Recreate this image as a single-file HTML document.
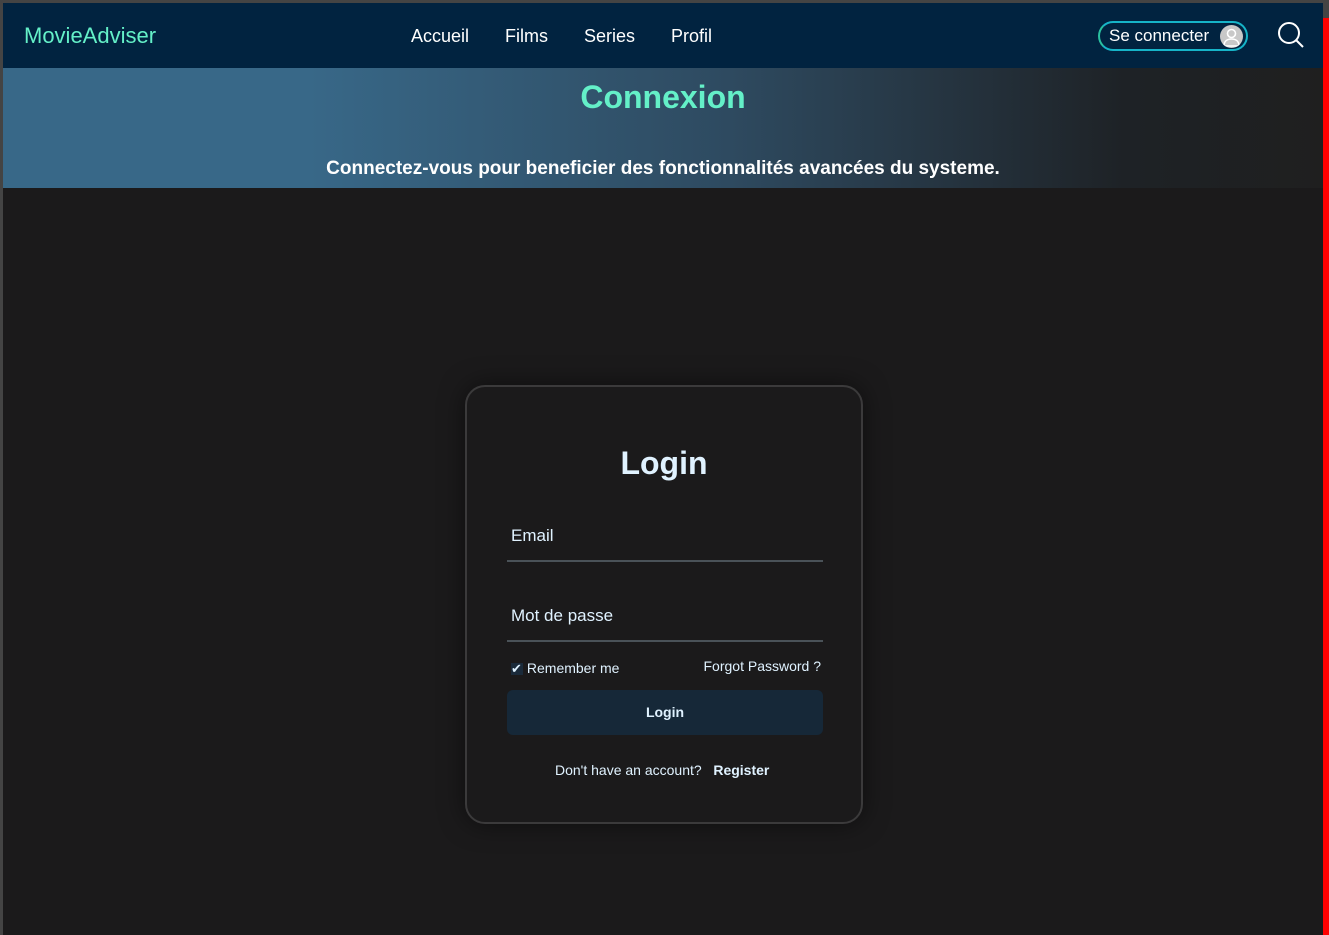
<!DOCTYPE html>
<html><head><meta charset="utf-8"><style>
*{margin:0;padding:0;box-sizing:border-box}
html,body{width:1329px;height:935px;overflow:hidden;background:#444;font-family:"Liberation Sans",Arial,sans-serif}
#frame{position:absolute;left:3px;top:3px;width:1320px;height:932px;background:#1b1a1b}
#red{position:absolute;left:1323px;top:18px;width:6px;height:917px;background:#f00}
nav{position:absolute;left:0;top:0;width:1320px;height:65px;background:#012340}
.logo{position:absolute;left:21px;top:20px;font-size:22px;color:#64f0c8}
.links{position:absolute;top:23px;left:407px;font-size:18px;color:#fff}
.links span{position:absolute;white-space:nowrap}
.btn{position:absolute;left:1095px;top:18px;width:150px;height:30px;border-radius:15px;border:2px solid #16b4c8;border-left-color:#2ac0a0;color:#fff;font-size:17px;padding:3px 0 0 9px}
.av{position:absolute;right:3px;top:2px;width:23px;height:23px;border-radius:50%;background:#c8c8c8;overflow:hidden}
.banner{position:absolute;left:0;top:65px;width:1320px;height:120px;background:linear-gradient(90deg,#386888 0%,#386888 23%,#2e4a60 55%,#1e2226 85%,#1f1f1f 100%)}
.banner h1{position:absolute;left:0;width:1320px;text-align:center;top:11px;font-size:32px;color:#64f0c8}
.banner p{position:absolute;left:0;width:1320px;text-align:center;top:90px;font-size:19px;font-weight:bold;color:#fff}
.card{position:absolute;left:462px;top:382px;width:398px;height:439px;border:2px solid #3b3a3b;border-radius:20px;background:#1b1a1b;box-shadow:0 0 25px rgba(0,0,0,.5)}
.card h2{position:absolute;left:0;width:100%;text-align:center;top:58px;font-size:32px;color:#e0f2ff}
.f{position:absolute;left:40px;width:316px;border-bottom:2px solid #4a5258;color:#e0f2ff;font-size:17px;padding-left:4px}
.small{position:absolute;font-size:14px;color:#e0f2ff}
.lb{position:absolute;left:40px;top:303px;width:316px;height:45px;border-radius:6px;background:#162838;color:#e0f2ff;font-size:14px;font-weight:bold;text-align:center;line-height:45px}
</style></head><body>
<div id="frame">
<nav>
<div class="logo">MovieAdviser</div>
<div class="links"><span style="left:1px">Accueil</span><span style="left:95px">Films</span><span style="left:174px">Series</span><span style="left:261px">Profil</span></div>
<div class="btn">Se connecter<div class="av"><svg width="23" height="23" viewBox="0 0 23 23" fill="none" stroke="#fff" stroke-width="1.6"><circle cx="11.5" cy="8.5" r="4"/><path d="M4 21c0-5 3.5-7 7.5-7s7.5 2 7.5 7z"/></svg></div></div>
<svg style="position:absolute;left:1274px;top:18px" width="28" height="28" viewBox="0 0 28 28" fill="none" stroke="#fff" stroke-width="2"><circle cx="12" cy="12" r="10"/><path d="M19 19l7 7"/></svg>
</nav>
<div class="banner"><h1>Connexion</h1><p>Connectez-vous pour beneficier des fonctionnalités avancées du systeme.</p></div>
<div class="card">
<h2>Login</h2>
<div class="f" style="top:139px;height:36px">Email</div>
<div class="f" style="top:219px;height:36px">Mot de passe</div>
<div class="small" style="left:44px;top:273px"><span style="display:inline-block;width:12px;height:12px;background:#1a2a3a;font-size:13px;line-height:12px;vertical-align:0">✔</span> Remember me</div>
<div class="small" style="right:40px;top:271px">Forgot Password ?</div>
<div class="lb">Login</div>
<div class="small" style="left:88px;top:375px">Don't have an account? &nbsp;&nbsp;<b>Register</b></div>
</div>
</div>
<div id="red"></div>
</body></html>
